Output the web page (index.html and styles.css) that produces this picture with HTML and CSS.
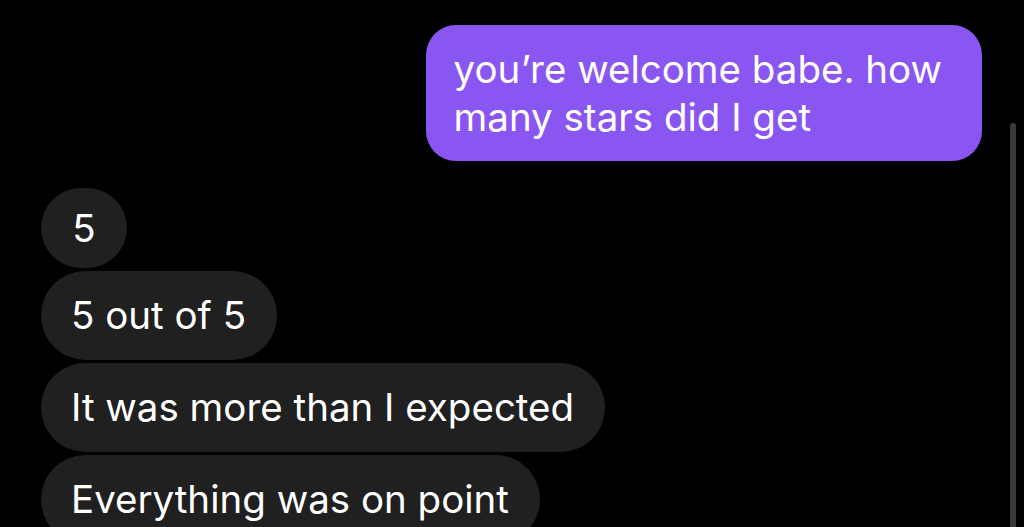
FILE: index.html
```html
<!DOCTYPE html>
<html lang="en">
<head>
<meta charset="utf-8">
<title>Chat</title>
<link rel="stylesheet" href="styles.css">
</head>
<body>
<main class="thread">
  <div class="msg msg-out">you’re welcome babe. how<br>many stars did I get</div>
  <div class="group-in">
    <div class="msg msg-in msg-single">5</div>
    <div class="msg msg-in">5 out of 5</div>
    <div class="msg msg-in">It was more than I expected</div>
    <div class="msg msg-in">Everything was on point</div>
  </div>
</main>
<div class="scrollbar"></div>
</body>
</html>
```
FILE: styles.css
```css
html, body {
  margin: 0;
  padding: 0;
  background: #000;
  height: 100%;
  overflow: hidden;
}
body {
  font-family: Inter, "Liberation Sans", Arial, sans-serif;
  color: #fff;
}
.thread {
  display: flex;
  flex-direction: column;
  padding: 25px 42px 0 41px;
}
.msg {
  font-size: 38.5px;
  line-height: 48px;
  white-space: nowrap;
}
.msg-out {
  align-self: flex-end;
  background: #8a56f1;
  padding: 20px 40px 20px 28px;
  border-radius: 30px;
}
.group-in {
  display: flex;
  flex-direction: column;
  align-items: flex-start;
  gap: 3px;
  margin-top: 27px;
}
.msg-in {
  background: #202020;
  padding: 20px 31px 21px 30px;
  border-radius: 45px;
}
.msg-single {
  width: 86px;
  height: 80px;
  box-sizing: border-box;
  padding: 0;
  display: flex;
  align-items: center;
  justify-content: center;
  border-radius: 40px;
}
.scrollbar {
  position: absolute;
  left: 1010px;
  top: 123px;
  width: 6px;
  bottom: 0;
  background: #3a3a3a;
  border-radius: 3px 3px 0 0;
}
```
